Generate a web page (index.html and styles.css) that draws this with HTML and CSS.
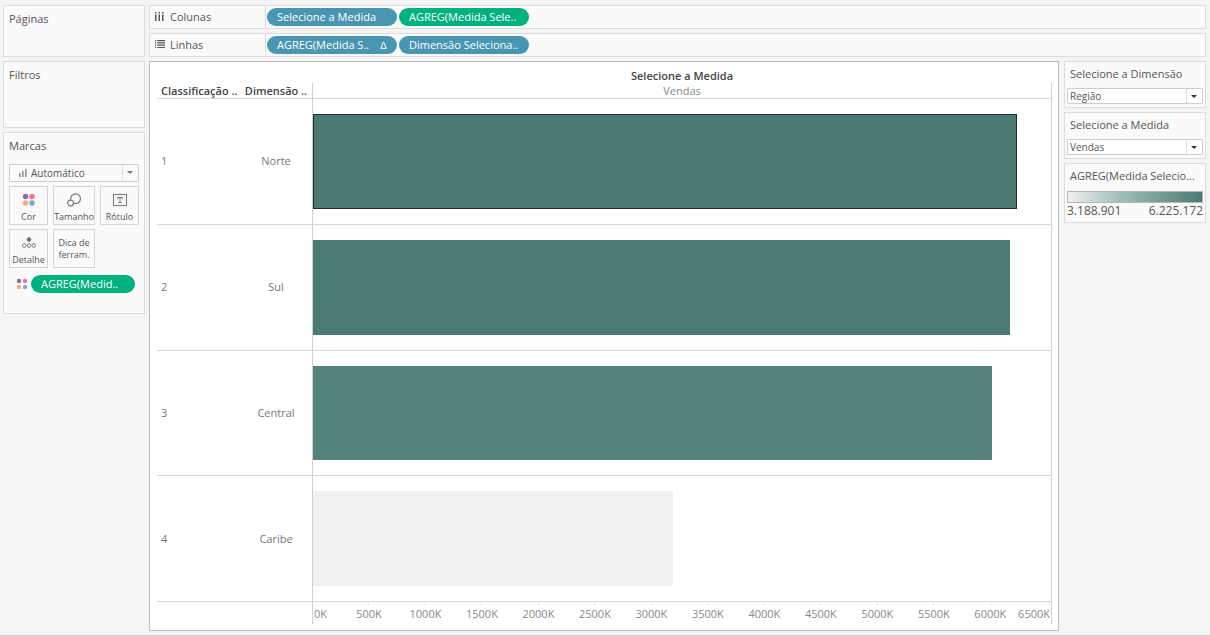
FILE: index.html
```
<!DOCTYPE html>
<html lang="pt-BR">
<head>
<meta charset="utf-8">
<title>Vendas por Região</title>
<meta name="viewport" content="width=device-width, initial-scale=1">
<link rel="stylesheet" href="styles.css">
</head>
<body>
<div class="app">
  <aside class="sidebar">
    <section class="card pages"><h2 class="card-title">Páginas</h2></section>
    <section class="card filters"><h2 class="card-title">Filtros</h2></section>
    <section class="card marks">
      <h2 class="card-title">Marcas</h2>
      <div class="picker mark-type">
        <svg class="type-icon" width="8" height="8" viewBox="0 0 8 8" fill="#999"><path d="M0 4h1.7v4H0zM3 2h1.7v6H3zM6 0h1.7v8H6z"/></svg>
        <select class="picker-select" aria-label="Tipo de marca"><option>Automático</option></select>
      </div>
      <div class="mark-grid">
        <button class="mark-button" type="button">
          <svg class="mark-icon" width="14" height="14" viewBox="0 0 14 14"><circle cx="3.5" cy="3.5" r="2.7" fill="#8a6d9b"/><circle cx="10" cy="3.5" r="2.7" fill="#f8718a"/><circle cx="3.5" cy="10" r="2.7" fill="#f5a882"/><circle cx="10" cy="10" r="2.7" fill="#7fa5d0"/></svg>
          <span>Cor</span>
        </button>
        <button class="mark-button" type="button">
          <svg class="mark-icon" width="14" height="14" viewBox="0 0 14 14" fill="none" stroke="#777" stroke-width="1.2"><path d="M3.8 7A4.9 4.9 0 1 1 6.6 10.2"/><circle cx="3.6" cy="10" r="2.9"/></svg>
          <span>Tamanho</span>
        </button>
        <button class="mark-button" type="button">
          <svg class="mark-icon" width="14" height="14" viewBox="0 0 14 14" fill="none" stroke="#777"><rect x=".5" y="1.5" width="13" height="11"/><path d="M4.5 6V4.5h5V6M7 4.5v5M5.5 9.5h3"/></svg>
          <span>Rótulo</span>
        </button>
        <button class="mark-button" type="button">
          <svg class="mark-icon" width="14" height="14" viewBox="0 0 14 14" fill="none" stroke="#777"><circle cx="7" cy="3.5" r="1.8" fill="#666"/><circle cx="2.2" cy="9.5" r="1.8"/><circle cx="7" cy="9.5" r="1.8"/><circle cx="11.8" cy="9.5" r="1.8"/></svg>
          <span>Detalhe</span>
        </button>
        <button class="mark-button text-only" type="button"><span>Dica de ferram.</span></button>
      </div>
      <div class="mark-pill-row">
        <svg width="12" height="12" viewBox="0 0 12 12"><circle cx="3" cy="3" r="2.2" fill="#8a6d9b"/><circle cx="9" cy="3" r="2.2" fill="#f8718a"/><circle cx="3" cy="9" r="2.2" fill="#f5a882"/><circle cx="9" cy="9" r="2.2" fill="#7fa5d0"/></svg>
        <button class="pill green" type="button">AGREG(Medid..</button>
      </div>
    </section>
  </aside>

  <div class="workspace">
    <div class="shelf">
      <div class="shelf-label">
        <svg width="10" height="10" viewBox="0 0 10 10" fill="#555"><path d="M0 0h1.5v1.5H0zM3.5 0H5v1.5H3.5zM7 0h1.5v1.5H7zM0 2.5h1.5V9H0zM3.5 2.5H5V9H3.5zM7 2.5h1.5V9H7z"/></svg>
        <span>Colunas</span>
      </div>
      <div class="pills">
        <button class="pill blue" type="button">Selecione a Medida</button>
        <button class="pill green" type="button">AGREG(Medida Sele..</button>
      </div>
    </div>
    <div class="shelf">
      <div class="shelf-label">
        <svg width="10" height="10" viewBox="0 0 10 10" fill="#555"><path d="M0 0h1.3v1.2H0zM0 2.3h1.3v1.2H0zM0 4.6h1.3v1.2H0zM0 6.9h1.3v1.2H0zM2.3 0H10v1.2H2.3zM2.3 2.3H10v1.2H2.3zM2.3 4.6H10v1.2H2.3zM2.3 6.9H10v1.2H2.3z"/></svg>
        <span>Linhas</span>
      </div>
      <div class="pills">
        <button class="pill blue" type="button"><span>AGREG(Medida S..</span><svg width="7" height="8" viewBox="0 0 7 8" fill="none" stroke="#fff"><path d="M3.5 1 6.3 7.3H.7z"/></svg></button>
        <button class="pill blue" type="button">Dimensão Seleciona..</button>
      </div>
    </div>

    <div class="content">
      <main class="canvas">
        <h1 class="chart-title">Selecione a Medida</h1>
        <div class="chart">
          <div class="row head">
            <div class="rank">Classificação ..</div><div class="name">Dimensão ..</div><div class="plot">Vendas</div>
          </div>
          <div class="row">
            <div class="rank">1</div><div class="name">Norte</div><div class="plot"><div class="bar selected" style="width:95.4%;background:#4b7974"></div></div>
          </div>
          <div class="row">
            <div class="rank">2</div><div class="name">Sul</div><div class="plot"><div class="bar" style="width:94.5%;background:#4c7a75"></div></div>
          </div>
          <div class="row">
            <div class="rank">3</div><div class="name">Central</div><div class="plot"><div class="bar" style="width:92%;background:#54827d"></div></div>
          </div>
          <div class="row">
            <div class="rank">4</div><div class="name">Caribe</div><div class="plot"><div class="bar" style="width:48.8%;background:#f0f0f0"></div></div>
          </div>
          <div class="row foot">
            <div class="rank"></div><div class="name"></div>
            <div class="plot axis">
              <span class="first">0K</span><span>500K</span><span>1000K</span><span>1500K</span><span>2000K</span><span>2500K</span><span>3000K</span><span>3500K</span><span>4000K</span><span>4500K</span><span>5000K</span><span>5500K</span><span>6000K</span><span class="last">6500K</span>
            </div>
          </div>
        </div>
      </main>

      <aside class="controls">
        <section class="card control">
          <label class="control-label" for="dimension">Selecione a Dimensão</label>
          <div class="picker"><select class="picker-select" id="dimension"><option>Região</option></select></div>
        </section>
        <section class="card control">
          <label class="control-label" for="measure">Selecione a Medida</label>
          <div class="picker"><select class="picker-select" id="measure"><option>Vendas</option></select></div>
        </section>
        <section class="card control legend">
          <h2 class="control-label">AGREG(Medida Selecio...</h2>
          <div class="ramp"></div>
          <div class="range"><span>3.188.901</span><span>6.225.172</span></div>
        </section>
      </aside>
    </div>
  </div>
</div>
</body>
</html>
```
FILE: styles.css
```
* { box-sizing: border-box; }
body {
  margin: 0;
  background: #f4f4f4;
  color: #555;
  font: 11px/16px "Open Sans", "Noto Sans", sans-serif;
}
h1, h2 { margin: 0; font: inherit; }
button, select { margin: 0; font: inherit; color: inherit; }
svg { flex: none; }

.app {
  display: grid;
  grid-template-columns: 142px minmax(0, 1fr);
  gap: 4px;
  min-height: 100vh;
  padding: 5px 4px 4px 3px;
  border-bottom: 1px solid #ccc;
}
.card { background: #fafafa; border: 1px solid #dcdcdc; }
.card-title { font-size: 11px; line-height: 16px; }

.sidebar { display: flex; flex-direction: column; gap: 4px; }
.sidebar .card { padding: 5px; }
.pages { min-height: 52px; }
.filters { min-height: 67px; }
.marks { min-height: 182px; }

.picker {
  position: relative;
  display: flex;
  height: 16px;
  background: #fff;
  border: 1px solid #ccc;
  border-radius: 1px;
}
.picker::after {
  content: "";
  position: absolute;
  right: 5px;
  top: 6px;
  border: 3px solid transparent;
  border-top-color: #333;
  border-bottom: 0;
  pointer-events: none;
}
.picker::before {
  content: "";
  position: absolute;
  right: 15px;
  top: 0;
  bottom: 0;
  border-left: 1px solid #e0e0e0;
}
.picker-select {
  width: 100%;
  padding: 0 18px 0 2px;
  border: 0;
  background: transparent;
  appearance: none;
  font-size: 10px;
  line-height: 14px;
}
.mark-type { height: 18px; margin-top: 10px; background: #fafafa; align-items: center; padding-left: 9px; gap: 2px; }
.mark-type::after { border-top-color: #777; }

.mark-grid {
  display: grid;
  grid-template-columns: 39fr 42fr 39fr;
  grid-auto-rows: 39px;
  gap: 4px 5px;
  margin-top: 4px;
}
.mark-button {
  display: flex;
  flex-direction: column;
  align-items: center;
  justify-content: space-between;
  padding: 6px 0 1px;
  background: #fafafa;
  border: 1px solid #d4d4d4;
  font-size: 9px;
  line-height: 12px;
}
.text-only { justify-content: center; padding: 0 2px; }
.mark-pill-row { display: flex; align-items: center; gap: 3px; margin-top: 7px; padding: 0 4px 0 7px; }
.mark-pill-row .pill { flex: 1; width: auto; }

.pill {
  display: flex;
  align-items: center;
  justify-content: space-between;
  width: 130px;
  height: 18px;
  padding: 0 10px;
  border: 0;
  border-radius: 9px;
  color: #fff;
  font-weight: 500;
  white-space: nowrap;
}
.blue { background: #4996b2; }
.green { background: #00b180; }

.workspace { display: flex; flex-direction: column; gap: 4px; min-width: 0; }
.shelf { display: flex; height: 24px; background: #fafafa; border: 1px solid #dcdcdc; }
.shelf-label { display: flex; align-items: center; gap: 5px; width: 116px; padding-left: 5px; border-right: 1px solid #d4d4d4; }
.pills { display: flex; align-items: center; gap: 2px; padding-left: 1px; }

.content { flex: 1; display: grid; grid-template-columns: minmax(0, 1fr) 142px; gap: 5px; }
.canvas {
  display: flex;
  flex-direction: column;
  padding: 7px 6px 6px 7px;
  background: #fff;
  border: 1px solid #bbb;
}
.chart-title { padding-left: 155px; text-align: center; font-weight: 600; line-height: 14px; color: #444; }
.chart { flex: 1; display: flex; flex-direction: column; }
.row {
  flex: 1;
  display: grid;
  grid-template-columns: 83px 72px minmax(0, 1fr);
  border-bottom: 1px solid #d8d8d8;
}
.rank, .name { display: flex; align-items: center; color: #777; }
.rank { padding-left: 4px; }
.name { justify-content: center; font-weight: 500; }
.plot { padding: 15px 0; border: solid #d0d0d0; border-width: 0 1px; }
.bar { height: 100%; }
.selected { border: 1px solid #1c2c2a; }
.head { flex: none; height: 16px; white-space: nowrap; }
.head .rank, .head .name { color: #444; font-weight: 600; }
.head .plot { padding: 0; text-align: center; color: #888; }
.foot { flex: none; height: 22px; border: 0; }
.axis { display: flex; padding: 0; color: #888; }
.axis span {
  flex: 566 1 0;
  display: flex;
  flex-direction: column;
  align-items: center;
  min-width: 0;
}
.axis span::before { content: ""; height: 3px; margin-bottom: 1px; border-left: 1px solid #e6e6e6; }
.axis .first { flex-grow: 268; align-items: flex-start; padding-left: 1px; }
.axis .last { flex-grow: 315; align-items: flex-end; padding-right: 1px; }
.axis .first::before { border: 0; }

.controls { display: flex; flex-direction: column; gap: 4px; }
.control { padding: 4px 2px 3px; }
.control-label { display: block; padding: 0 3px; line-height: 16px; white-space: nowrap; }
.control .picker { margin-top: 6px; }
.ramp { height: 12px; margin-top: 7px; border: 1px solid #bbb5ad; background: linear-gradient(90deg, #f0f0ee, #a5c3c0 35%, #4a7a74); }
.range { display: flex; justify-content: space-between; font-size: 12px; line-height: 16px; }
```
